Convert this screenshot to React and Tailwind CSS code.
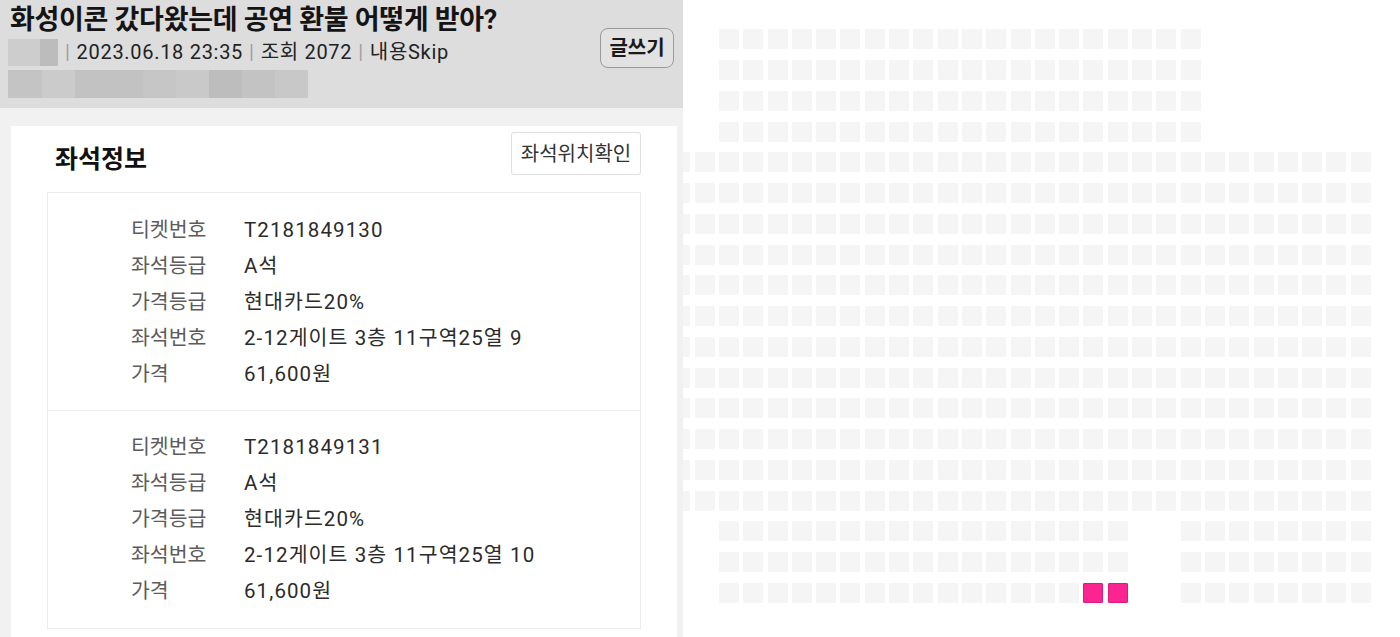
import React from 'react';

const TICKETS = [
  { no: 'T2181849130', grade: 'A석', price: '현대카드20%', seat: '2-12게이트 3층 11구역25열 9', amount: '61,600원' },
  { no: 'T2181849131', grade: 'A석', price: '현대카드20%', seat: '2-12게이트 3층 11구역25열 10', amount: '61,600원' },
];

const COLS = Array.from({ length: 29 }, (_, i) => i - 2);
const ROWS = Array.from({ length: 19 }, (_, i) => i);
const PICKED = [15, 16];

// which seats exist in a row (k = column index, 0 = first column of the upper block)
const hasSeat = (row, k) => {
  if (row < 4) return k >= 0 && k <= 19;
  if (row < 16) return true;
  return (k >= 0 && k <= 16) || (k >= 19 && k <= 26);
};

function InfoRow({ label, value }) {
  return (
    <div className="flex h-[36px] items-center text-[20.5px]">
      <span className="w-[113px] text-[#5c5c5c]">{label}</span>
      <span className="text-[#2b2b2b] tracking-[1.1px]">{value}</span>
    </div>
  );
}

function Ticket({ t, last }) {
  return (
    <div className={`pl-[83px] ${last ? 'pt-[18px] pb-[19px]' : 'pt-[19px] pb-[18px] border-b border-[#ececec]'}`}>
      <InfoRow label="티켓번호" value={t.no} />
      <InfoRow label="좌석등급" value={t.grade} />
      <InfoRow label="가격등급" value={t.price} />
      <InfoRow label="좌석번호" value={t.seat} />
      <InfoRow label="가격" value={t.amount} />
    </div>
  );
}

function SeatMap() {
  return (
    <div className="flex-1 overflow-hidden bg-white">
      <div className="ml-[-12.6px] pt-[29.3px] flex flex-col gap-[10.75px]">
        {ROWS.map(r => (
          <div key={r} className="flex gap-[4.3px]">
            {COLS.map(k => {
              const on = hasSeat(r, k);
              const picked = r === 18 && PICKED.includes(k);
              return (
                <div
                  key={k}
                  className={`w-[20px] h-[20px] shrink-0 rounded-[1px] ${!on ? 'invisible' : picked ? 'bg-[#fc2491] border border-[#d81d7c]' : 'bg-[#f5f5f5]'}`}
                />
              );
            })}
          </div>
        ))}
      </div>
    </div>
  );
}

export default function App() {
  return (
    <div className="w-[1400px] h-[637px] overflow-hidden flex bg-white font-['Roboto','Noto_Sans_CJK_KR',sans-serif]">
      {/* left: post + seat info */}
      <div className="w-[683px] shrink-0 flex flex-col bg-[#f1f1f1]">
        <div className="h-[108px] bg-[#dddddd] flex justify-between pl-[8px] pr-[9px]">
          <div className="pt-[3px]">
            <h1 className="pl-[2px] text-[27px] font-bold text-[#141414] leading-[34px] tracking-[-0.3px]">화성이콘 갔다왔는데 공연 환불 어떻게 받아?</h1>
            <div className="flex items-center h-[28px] mt-[1px]">
              <div className="flex h-[27px]">
                <div className="w-[32px] bg-[#cdcdcd]" />
                <div className="w-[18px] bg-[#bcbcbc]" />
              </div>
              <div className="ml-[7px] text-[20px] text-[#222] tracking-[0.7px] flex items-center">
                <span className="text-[#a0a0a0] mr-[6px]">|</span>
                <span>2023.06.18 23:35</span>
                <span className="text-[#a0a0a0] mx-[6px]">|</span>
                <span>조회 2072</span>
                <span className="text-[#a0a0a0] mx-[6px]">|</span>
                <span>내용Skip</span>
              </div>
            </div>
            <div className="flex h-[28px] mt-[4px] w-[300px]">
              <div className="w-[34px] bg-[#c4c4c4]" />
              <div className="w-[33px] bg-[#cbcbcb]" />
              <div className="w-[68px] bg-[#c2c2c2]" />
              <div className="w-[33px] bg-[#c6c6c6]" />
              <div className="w-[33px] bg-[#c9c9c9]" />
              <div className="w-[33px] bg-[#bdbdbd]" />
              <div className="w-[33px] bg-[#c3c3c3]" />
              <div className="w-[33px] bg-[#c8c8c8]" />
            </div>
          </div>
          <button className="mt-[28px] h-[40px] w-[74px] rounded-[8px] border border-[#9a9a9a] bg-[#e2e2e2] text-[20px] font-bold text-[#1a1a1a]">글쓰기</button>
        </div>

        <div className="flex-1 pt-[18px] pl-[11px] pr-[6px]">
          <div className="bg-white h-full pl-[36px] pr-[36px]">
            <div className="flex items-start justify-between h-[66px] pt-[6px]">
              <h2 className="pl-[8px] mt-[10px] text-[25px] leading-[36px] font-bold text-[#111]">좌석정보</h2>
              <button className="h-[43px] w-[130px] border border-[#dedede] rounded-[3px] text-[20px] text-[#333]">좌석위치확인</button>
            </div>
            <div className="border border-[#ececec]">
              {TICKETS.map((t, i) => (
                <Ticket key={t.no} t={t} last={i === TICKETS.length - 1} />
              ))}
            </div>
          </div>
        </div>
      </div>

      {/* right: seat map */}
      <SeatMap />
    </div>
  );
}
